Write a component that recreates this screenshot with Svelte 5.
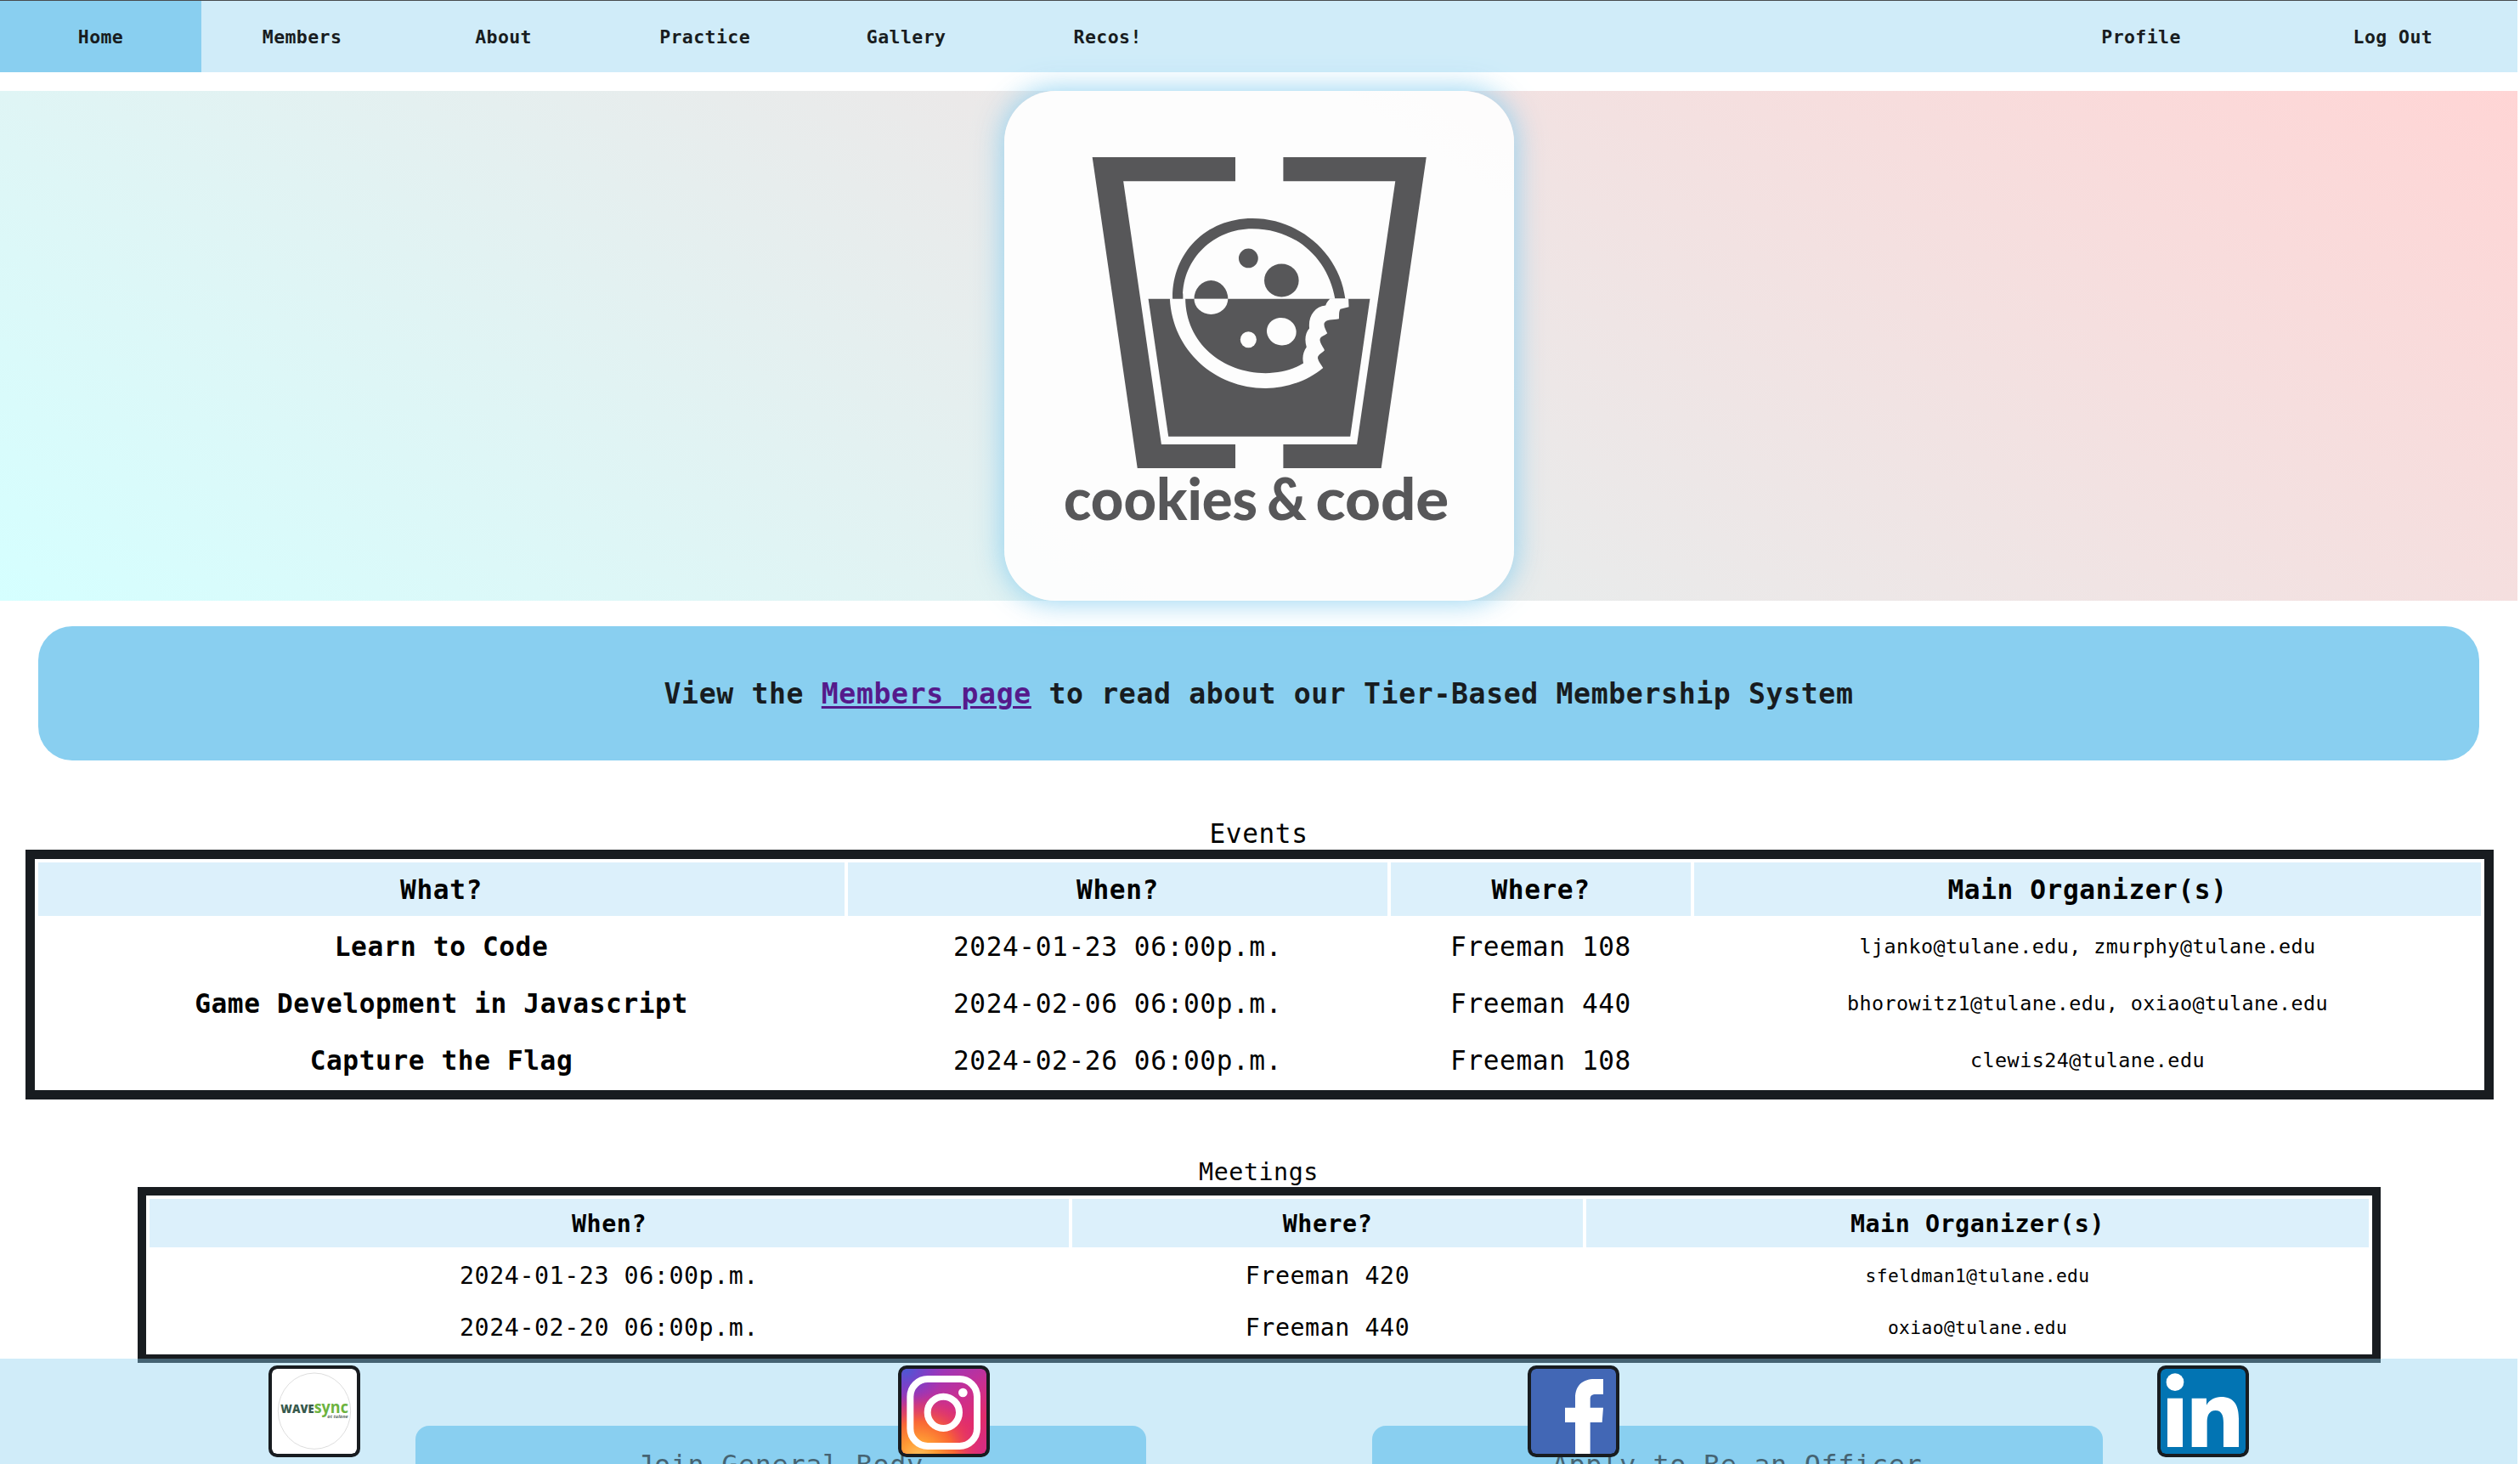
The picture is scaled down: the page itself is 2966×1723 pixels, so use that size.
<script>
  const links = ['Home', 'Members', 'About', 'Practice', 'Gallery', 'Recos!'];
  const account = ['Profile', 'Log Out'];

  const events = [
    { what: 'Learn to Code', when: '2024-01-23 06:00p.m.', where: 'Freeman 108', who: 'ljanko@tulane.edu, zmurphy@tulane.edu' },
    { what: 'Game Development in Javascript', when: '2024-02-06 06:00p.m.', where: 'Freeman 440', who: 'bhorowitz1@tulane.edu, oxiao@tulane.edu' },
    { what: 'Capture the Flag', when: '2024-02-26 06:00p.m.', where: 'Freeman 108', who: 'clewis24@tulane.edu' }
  ];

  const meetings = [
    { when: '2024-01-23 06:00p.m.', where: 'Freeman 420', who: 'sfeldman1@tulane.edu' },
    { when: '2024-02-20 06:00p.m.', where: 'Freeman 440', who: 'oxiao@tulane.edu' }
  ];
</script>

<div class="page">
  <nav>
    {#each links as link, i}
      <a href="#top" class="tab" class:active={i === 0}>{link}</a>
    {/each}
    <span class="spacer"></span>
    {#each account as link}
      <a href="#top" class="tab wide">{link}</a>
    {/each}
  </nav>

  <header>
    <svg class="logo" viewBox="53 65 1447 1447" role="img" aria-label="cookies & code">
      <g fill="#575759">
        <path d="M303 253H709V321H391L499 1068H709V1136H431Z" />
        <path d="M1251 253H845V321H1163L1054 1068H845V1136H1123Z" />
        <path d="M462 655H1091L1035 1046H519Z" />
        <path d="M531 655C528 530 622 427 757 427C890 427 1004 525 1021 655H992C972 540 880 456 757 456C645 456 556 545 560 655Z" />
        <circle cx="746" cy="540" r="27.500" />
        <ellipse cx="840" cy="603" rx="49" ry="47" />
        <path d="M592 655A48 52 0 0 1 688 655Z" />
      </g>
      <g fill="#fdfdfd">
        <path d="M523 654H567C568 780 672 866 795 866C834 866 872 857 902 838C898 820 902 804 911 792C905 773 907 752 919 739C915 705 934 677 965 674C968 664 975 658 978 654H1030L1031 678L1007 684C1002 692 1004 702 1003 712C985 715 966 713 961 725C960 736 966 743 970 753C961 761 948 762 949 773C951 785 958 791 962 801C955 810 942 813 943 824C945 834 953 842 958 851C913 888 855 909 795 909C650 909 530 801 523 654Z" />
        <path d="M592 655H688A48 44 0 0 1 592 655Z" />
        <circle cx="746" cy="771" r="23" />
        <ellipse cx="840" cy="748" rx="42" ry="39" transform="rotate(15 840 748)" />
      </g>
      <path fill="#575759" d="M531 640H560V655H531Z" />
      <text x="222" y="1282" textLength="550" lengthAdjust="spacingAndGlyphs">cookies</text>
      <text x="799" y="1282" textLength="112" lengthAdjust="spacingAndGlyphs">&amp;</text>
      <text x="937" y="1282" textLength="378" lengthAdjust="spacingAndGlyphs">code</text>
    </svg>
  </header>

  <section class="notice">
    <h3>View the <a href="#members">Members page</a> to read about our Tier-Based Membership System</h3>
  </section>

  <div class="caption events-caption">Events</div>
  <table class="events">
    <colgroup><col class="e1" /><col class="e2" /><col class="e3" /><col class="e4" /></colgroup>
    <thead>
      <tr><th>What?</th><th>When?</th><th>Where?</th><th>Main Organizer(s)</th></tr>
    </thead>
    <tbody>
      {#each events as e}
        <tr><td><b>{e.what}</b></td><td>{e.when}</td><td>{e.where}</td><td><span class="mail">{e.who}</span></td></tr>
      {/each}
    </tbody>
  </table>

  <div class="caption meetings-caption">Meetings</div>
  <table class="meetings">
    <colgroup><col class="m1" /><col class="m2" /><col class="m3" /></colgroup>
    <thead>
      <tr><th>When?</th><th>Where?</th><th>Main Organizer(s)</th></tr>
    </thead>
    <tbody>
      {#each meetings as m}
        <tr><td>{m.when}</td><td>{m.where}</td><td><span class="mail">{m.who}</span></td></tr>
      {/each}
    </tbody>
  </table>

  <div class="join">
    <div class="button">Join General Body</div>
    <div class="button">Apply to Be an Officer</div>
  </div>

  <footer>
    <a class="icon" href="#wavesync" aria-label="WaveSync">
      <svg viewBox="30 33 300 300">
        <rect x="30" y="33" width="300" height="300" fill="#fff" />
        <ellipse cx="180" cy="182" rx="128" ry="134" fill="none" stroke="#d6d6d6" stroke-width="2.500" />
        <text class="wave" x="61" y="188" textLength="118" lengthAdjust="spacingAndGlyphs">WAVE</text>
        <text class="sync" x="179" y="188" textLength="121" lengthAdjust="spacingAndGlyphs">sync</text>
        <text class="tulane" x="226" y="206" textLength="73" lengthAdjust="spacingAndGlyphs">at tulane</text>
      </svg>
    </a>
    <a class="icon" href="#instagram" aria-label="Instagram">
      <svg viewBox="33 33 300 300">
        <defs>
          <linearGradient id="ig-base" x1="0.200" y1="0" x2="0.800" y2="1">
            <stop offset="0" stop-color="#8a3ac8" />
            <stop offset="0.450" stop-color="#c92f92" />
            <stop offset="0.750" stop-color="#e22c6c" />
            <stop offset="1" stop-color="#d92c80" />
          </linearGradient>
          <radialGradient id="ig-warm" cx="0.200" cy="1.050" r="0.780">
            <stop offset="0" stop-color="#ffc560" />
            <stop offset="0.280" stop-color="#ff9a34" />
            <stop offset="0.550" stop-color="#fb6a30" stop-opacity="0.950" />
            <stop offset="0.780" stop-color="#ee4350" stop-opacity="0.500" />
            <stop offset="1" stop-color="#e22c6c" stop-opacity="0" />
          </radialGradient>
          <radialGradient id="ig-cool" cx="0.050" cy="0" r="0.450">
            <stop offset="0" stop-color="#4a5ad4" />
            <stop offset="1" stop-color="#8038c8" stop-opacity="0" />
          </radialGradient>
        </defs>
        <rect x="33" y="33" width="300" height="300" fill="url(#ig-base)" />
        <rect x="33" y="33" width="300" height="300" fill="url(#ig-warm)" />
        <rect x="33" y="33" width="300" height="300" fill="url(#ig-cool)" />
        <rect x="64" y="69" width="236" height="237" rx="62" fill="none" stroke="#fff" stroke-width="24" />
        <circle cx="181" cy="187" r="56" fill="none" stroke="#fff" stroke-width="24" />
        <circle cx="250" cy="117" r="16" fill="#fff" />
      </svg>
    </a>
    <a class="icon" href="#facebook" aria-label="Facebook">
      <svg viewBox="39 33 300 300">
        <rect x="39" y="33" width="300" height="300" fill="#4267b5" />
        <path fill="#fff" d="M195 333V222H159V170H195V135C195 92 222 69 262 69H294V123H268C254 123 248 128 248 140V170H294L290 222H248V333Z" />
      </svg>
    </a>
    <a class="icon" href="#linkedin" aria-label="LinkedIn">
      <svg viewBox="0 0 300 300">
        <rect width="300" height="300" fill="#0274b3" />
        <g fill="#fff">
          <circle cx="51" cy="47" r="31" />
          <rect x="24" y="104" width="54" height="172" />
          <path d="M110 104H162V128C172 110 192 99 213 99C260 99 276 130 276 176V276H222V190C222 166 216 147 194 147C171 147 164 166 164 188V276H110Z" />
        </g>
      </svg>
    </a>
  </footer>
</div>

<style>
  :global(body) {
    margin: 0;
    background: #fff;
  }

  .page {
    position: relative;
    width: 2963px;
    height: 1723px;
    overflow: hidden;
    font-family: 'DejaVu Sans Mono', 'Liberation Mono', monospace;
    color: #000;
  }

  .page * {
    letter-spacing: 0.0195em;
  }

  nav {
    display: flex;
    box-sizing: border-box;
    height: 85px;
    border-top: 1px solid #484b4e;
    background: rgba(137, 207, 240, 0.4);
  }

  .tab {
    box-sizing: border-box;
    width: 8%;
    line-height: 85px;
    height: 84px;
    text-align: center;
    text-decoration: none;
    font-size: 21.5px;
    font-weight: 700;
    color: #181c20;
  }

  .tab.wide {
    width: 10%;
    padding-left: 3px;
  }

  .tab.active {
    background: #89cff0;
  }

  .spacer {
    flex: 1;
  }

  header {
    display: flex;
    justify-content: center;
    height: 600px;
    margin-top: 22px;
    background: linear-gradient(33deg, #d5ffff, #ffd5d5);
  }

  .logo {
    width: 600px;
    height: 600px;
    border-radius: 60px;
    background: rgba(253, 253, 253, 0.97);
    box-shadow: 0 0 32px 3px rgba(137, 207, 240, 0.85);
  }

  .logo text {
    font: 900 166px Lato, 'Open Sans', sans-serif;
    letter-spacing: 0;
    fill: #575759;
  }

  .notice {
    margin: 30px 45px 0;
    height: 158px;
    border-radius: 40px;
    background: #89cff0;
    text-align: center;
  }

  h3 {
    margin: 0;
    font-size: 33.13px;
    line-height: 160px;
    color: #181c20;
  }

  h3 a {
    color: #551a8b;
    text-decoration-thickness: 3px;
    text-underline-offset: 3px;
  }

  .caption {
    text-align: center;
  }

  .events-caption {
    margin-top: 64px;
    height: 41px;
    line-height: 44px;
    font-size: 31.15px;
  }

  .meetings-caption {
    margin-top: 65px;
    height: 38px;
    line-height: 41px;
    font-size: 28.32px;
  }

  table {
    box-sizing: border-box;
    table-layout: fixed;
    border-collapse: separate;
    border-spacing: 4px;
    text-align: center;
  }

  th,
  td {
    padding: 2px 0 0;
    white-space: nowrap;
    vertical-align: middle;
  }

  th {
    background: #dcf0fb;
  }

  .events {
    width: 2905px;
    margin-left: 30px;
    border: 11px solid #181c20;
    font-size: 31.15px;
  }

  .events th,
  .events td {
    height: 61px;
    line-height: 61px;
  }

  .meetings {
    width: 2640px;
    margin-left: 162px;
    border: 10px solid #181c20;
    font-size: 28.32px;
  }

  .meetings th,
  .meetings td {
    height: 55px;
    line-height: 55px;
  }

  .mail {
    display: block;
    font-size: 0.75em;
  }

  .e1 { width: 949px; }
  .e2 { width: 635px; }
  .e3 { width: 353px; }
  .e4 { width: 926px; }
  .m1 { width: 1082px; }
  .m2 { width: 601px; }
  .m3 { width: 921px; }

  .join {
    display: flex;
    justify-content: center;
    gap: 266px;
    margin-top: 74px;
  }

  .button {
    width: 860px;
    height: 93px;
    line-height: 93px;
    border-radius: 16px;
    background: #89cff0;
    text-align: center;
    font-size: 31.86px;
    color: #181c20;
  }

  footer {
    position: absolute;
    left: 0;
    right: 0;
    bottom: 0;
    height: 124px;
    box-sizing: border-box;
    padding-top: 8px;
    display: flex;
    justify-content: space-around;
    align-items: flex-start;
    background: rgba(137, 207, 240, 0.4);
  }

  .icon {
    width: 100px;
    height: 100px;
    border: 4px solid #181c20;
    border-radius: 10px;
    overflow: hidden;
    background: #181c20;
  }

  .icon svg {
    display: block;
    width: 100px;
    height: 100px;
    border-radius: 6px;
  }

  .icon text {
    letter-spacing: 0;
  }

  .wave {
    font: 800 41px 'Open Sans', sans-serif;
    fill: #37594c;
  }

  .sync {
    font: 700 56px 'Open Sans', sans-serif;
    fill: #6db33f;
  }

  .tulane {
    font: italic 700 17px 'Open Sans', sans-serif;
    fill: #5d6b64;
  }
</style>
